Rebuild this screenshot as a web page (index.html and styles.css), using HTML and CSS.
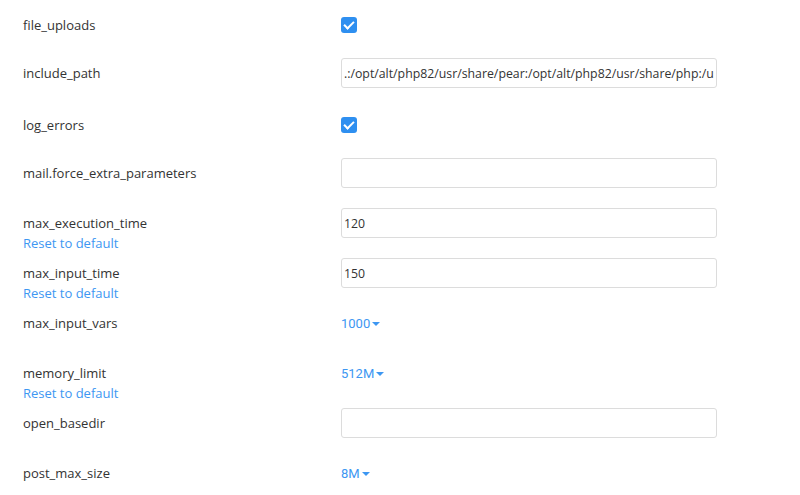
FILE: index.html
```html
<!DOCTYPE html>
<html lang="en">
<head>
    <meta charset="UTF-8">
    <title>PHP options</title>
    <link rel="stylesheet" href="styles.css">
</head>
<body>
    <div class="options">
        <div class="row row-check">
            <div class="label"><div class="name">file_uploads</div></div>
            <div class="control"><span class="check"></span></div>
        </div>
        <div class="row">
            <div class="label"><div class="name">include_path</div></div>
            <div class="control"><input class="field" type="text" value=".:/opt/alt/php82/usr/share/pear:/opt/alt/php82/usr/share/php:/usr/share/pear:/usr/share/php"></div>
        </div>
        <div class="row row-check">
            <div class="label"><div class="name">log_errors</div></div>
            <div class="control"><span class="check"></span></div>
        </div>
        <div class="row">
            <div class="label"><div class="name">mail.force_extra_parameters</div></div>
            <div class="control"><input class="field" type="text" value=""></div>
        </div>
        <div class="row">
            <div class="label">
                <div class="name">max_execution_time</div>
                <a class="reset" href="#">Reset to default</a>
            </div>
            <div class="control"><input class="field" type="text" value="120"></div>
        </div>
        <div class="row">
            <div class="label">
                <div class="name">max_input_time</div>
                <a class="reset" href="#">Reset to default</a>
            </div>
            <div class="control"><input class="field" type="text" value="150"></div>
        </div>
        <div class="row">
            <div class="label"><div class="name">max_input_vars</div></div>
            <div class="control"><span class="dropdown">1000<i class="caret"></i></span></div>
        </div>
        <div class="row">
            <div class="label">
                <div class="name">memory_limit</div>
                <a class="reset" href="#">Reset to default</a>
            </div>
            <div class="control"><span class="dropdown">512M<i class="caret"></i></span></div>
        </div>
        <div class="row">
            <div class="label"><div class="name">open_basedir</div></div>
            <div class="control"><input class="field" type="text" value=""></div>
        </div>
        <div class="row">
            <div class="label"><div class="name">post_max_size</div></div>
            <div class="control"><span class="dropdown">8M<i class="caret"></i></span></div>
        </div>
    </div>
</body>
</html>
```

FILE: styles.css
```css
body {
    margin: 0;
    background: #fff;
    font-family: 'Open Sans', sans-serif;
    font-size: 13px;
    color: #333;
}
.options {
    padding: 8px 0 0 23px;
}
.row {
    box-sizing: border-box;
    display: flex;
    align-items: flex-start;
    min-height: 50px;
}
.row-check {
    padding-top: 2px;
}
.label {
    width: 318px;
    flex-shrink: 0;
}
.name {
    line-height: 30px;
}
.reset {
    display: block;
    line-height: 18px;
    margin-top: -4px;
    color: #3d97f2;
    text-decoration: none;
}
.control {
    height: 30px;
    display: flex;
    align-items: center;
}
.check {
    position: relative;
    width: 16px;
    height: 16px;
    border-radius: 3px;
    background: #2e8ff0;
}
.check::after {
    content: '';
    position: absolute;
    left: 5px;
    top: 2px;
    width: 4px;
    height: 8px;
    border: solid #fff;
    border-width: 0 2px 2px 0;
    transform: rotate(45deg);
}
.field {
    box-sizing: border-box;
    width: 376px;
    height: 30px;
    padding: 0 2px;
    border: 1px solid #dcdcdc;
    border-radius: 3px;
    font-family: 'Open Sans', sans-serif;
    font-size: 12.3px;
    color: #333;
    outline: none;
}
.dropdown {
    font-family: Roboto, sans-serif;
    font-size: 13px;
    color: #3d97f2;
}
.caret {
    display: inline-block;
    margin-left: 2px;
    vertical-align: middle;
    border-top: 4px solid #3d97f2;
    border-left: 4px solid transparent;
    border-right: 4px solid transparent;
}
```
